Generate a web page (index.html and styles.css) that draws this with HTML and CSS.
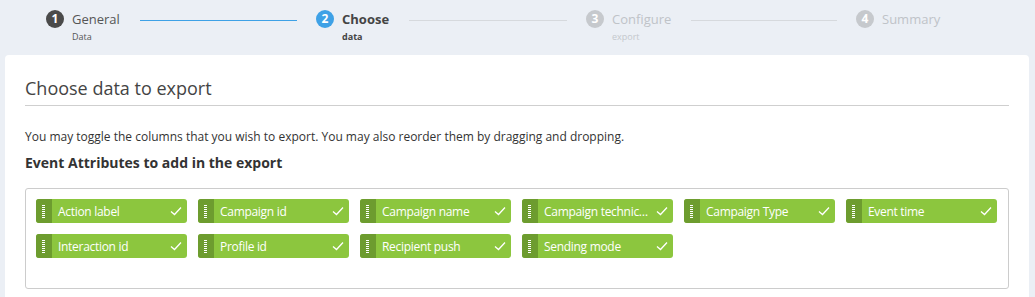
FILE: index.html
```html
<!DOCTYPE html>
<html>
<head>
<meta charset="utf-8">
<link rel="stylesheet" href="styles.css">
</head>
<body>
<div class="stepper">
  <div class="step done">
    <span class="num">1</span>
    <div class="label"><div class="title">General</div><div class="sub">Data</div></div>
    <span class="line active"></span>
  </div>
  <div class="step current">
    <span class="num">2</span>
    <div class="label"><div class="title">Choose</div><div class="sub">data</div></div>
    <span class="line"></span>
  </div>
  <div class="step todo">
    <span class="num">3</span>
    <div class="label"><div class="title">Configure</div><div class="sub">export</div></div>
    <span class="line"></span>
  </div>
  <div class="step todo">
    <span class="num">4</span>
    <div class="label"><div class="title">Summary</div></div>
  </div>
</div>
<div class="card">
  <h1 class="heading">Choose data to export</h1>
  <p class="intro">You may toggle the columns that you wish to export. You may also reorder them by dragging and dropping.</p>
  <h2 class="subheading">Event Attributes to add in the export</h2>
  <div class="chipbox">
    <div class="chip"><span class="handle"></span><span class="text">Action label</span><svg class="check" viewBox="0 0 12 10"><path d="M1 5.5 L4.5 8.5 L11 1.5"/></svg></div>
    <div class="chip"><span class="handle"></span><span class="text">Campaign id</span><svg class="check" viewBox="0 0 12 10"><path d="M1 5.5 L4.5 8.5 L11 1.5"/></svg></div>
    <div class="chip"><span class="handle"></span><span class="text">Campaign name</span><svg class="check" viewBox="0 0 12 10"><path d="M1 5.5 L4.5 8.5 L11 1.5"/></svg></div>
    <div class="chip"><span class="handle"></span><span class="text">Campaign technical name</span><svg class="check" viewBox="0 0 12 10"><path d="M1 5.5 L4.5 8.5 L11 1.5"/></svg></div>
    <div class="chip"><span class="handle"></span><span class="text">Campaign Type</span><svg class="check" viewBox="0 0 12 10"><path d="M1 5.5 L4.5 8.5 L11 1.5"/></svg></div>
    <div class="chip"><span class="handle"></span><span class="text">Event time</span><svg class="check" viewBox="0 0 12 10"><path d="M1 5.5 L4.5 8.5 L11 1.5"/></svg></div>
    <div class="chip"><span class="handle"></span><span class="text">Interaction id</span><svg class="check" viewBox="0 0 12 10"><path d="M1 5.5 L4.5 8.5 L11 1.5"/></svg></div>
    <div class="chip"><span class="handle"></span><span class="text">Profile id</span><svg class="check" viewBox="0 0 12 10"><path d="M1 5.5 L4.5 8.5 L11 1.5"/></svg></div>
    <div class="chip"><span class="handle"></span><span class="text">Recipient push</span><svg class="check" viewBox="0 0 12 10"><path d="M1 5.5 L4.5 8.5 L11 1.5"/></svg></div>
    <div class="chip"><span class="handle"></span><span class="text">Sending mode</span><svg class="check" viewBox="0 0 12 10"><path d="M1 5.5 L4.5 8.5 L11 1.5"/></svg></div>
  </div>
</div>
</body>
</html>
```
FILE: styles.css
```css
* { box-sizing: border-box; }
html, body { margin: 0; padding: 0; }
body {
  background: #ebeff5;
  font-family: "Open Sans", "Liberation Sans", sans-serif;
  color: #333;
  height: 297px;
  overflow: hidden;
}
.stepper {
  display: grid;
  grid-template-columns: repeat(4, 270px);
  padding: 10px 0 0 46px;
  height: 55px;
}
.step {
  display: flex;
  align-items: flex-start;
}
.num {
  width: 18px;
  height: 18px;
  border-radius: 50%;
  color: #fff;
  font-size: 12px;
  font-weight: 700;
  line-height: 18px;
  text-align: center;
  flex: none;
}
.done .num { background: #4a4a4a; }
.current .num { background: #3ea1e6; }
.todo .num { background: #c6c9cd; }
.label { margin-left: 8px; }
.title { font-size: 13px; line-height: 18px; }
.sub { font-size: 9px; line-height: 12px; margin-top: 3px; }
.done .title { color: #555; }
.done .sub { color: #555; }
.current .title { color: #444; font-weight: 700; }
.current .sub { color: #444; font-weight: 700; }
.todo .title { color: #bfc3c8; }
.todo .sub { color: #c4c8cd; }
.line {
  flex: 1;
  height: 1px;
  background: #d6d9dd;
  margin: 10px 19px 0 20px;
}
.line.active { background: #3ea1e6; }
.card {
  background: #fff;
  margin: 0 6px 0 5px;
  border-radius: 4px 4px 0 0;
  padding: 21px 20px 20px 20px;
  height: 242px;
}
.heading {
  margin: 0;
  font-size: 18px;
  font-weight: 400;
  line-height: 24px;
  color: #444;
  padding-bottom: 5px;
  border-bottom: 1px solid #cfcfcf;
}
.intro {
  margin: 22px 0 0 0;
  font-size: 12px;
  line-height: 18px;
  color: #333;
}
.subheading {
  margin: 7px 0 0 0;
  font-size: 14px;
  line-height: 20px;
  font-weight: 700;
  color: #333;
}
.chipbox {
  margin-top: 15px;
  border: 1px solid #cccccc;
  border-radius: 3px;
  height: 101px;
  padding: 10px;
  display: grid;
  grid-template-columns: repeat(6, 151px);
  grid-auto-rows: 24px;
  column-gap: 11px;
  row-gap: 11px;
  align-content: start;
}
.chip {
  display: flex;
  align-items: center;
  background: #8cc63e;
  border-radius: 3px;
  height: 24px;
  overflow: hidden;
  color: #fff;
  font-size: 12px;
  letter-spacing: -0.3px;
}
.handle {
  flex: none;
  width: 16px;
  height: 24px;
  background: #6d9c2f;
  position: relative;
}
.handle::after {
  content: "";
  position: absolute;
  left: 6px;
  top: 6px;
  width: 3px;
  height: 13px;
  background-image: repeating-linear-gradient(to bottom, #fff 0 1px, transparent 1px 2px);
}
.text {
  flex: 1;
  padding-left: 6px;
  white-space: nowrap;
  overflow: hidden;
  text-overflow: ellipsis;
  min-width: 0;
}
.check {
  flex: none;
  width: 12px;
  height: 10px;
  margin: 0 5px 0 2px;
  fill: none;
  stroke: #fff;
  stroke-width: 1.3;
}
```
